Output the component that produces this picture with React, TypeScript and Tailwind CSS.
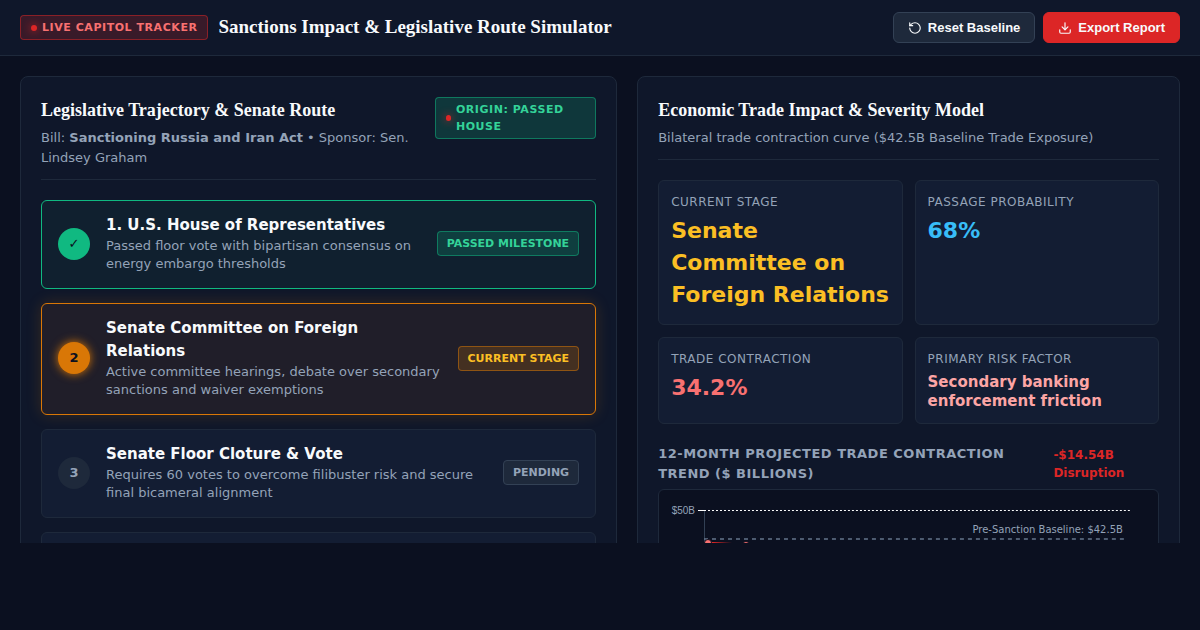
import type { ReactNode } from "react";
import { Download, RotateCcw } from "lucide-react";

type StepState = "passed" | "current" | "pending";

interface Step {
  marker: string;
  title: string;
  detail: string;
  badge: string;
  state: StepState;
}

const steps: Step[] = [
  {
    marker: "✓",
    title: "1. U.S. House of Representatives",
    detail: "Passed floor vote with bipartisan consensus on energy embargo thresholds",
    badge: "Passed Milestone",
    state: "passed",
  },
  {
    marker: "2",
    title: "Senate Committee on Foreign Relations",
    detail: "Active committee hearings, debate over secondary sanctions and waiver exemptions",
    badge: "Current Stage",
    state: "current",
  },
  {
    marker: "3",
    title: "Senate Floor Cloture & Vote",
    detail: "Requires 60 votes to overcome filibuster risk and secure final bicameral alignment",
    badge: "Pending",
    state: "pending",
  },
];

const cardStyles: Record<StepState, string> = {
  passed: "border-[#10b981] bg-[#10202f]",
  current: "border-[#d97706] bg-[#201e29] shadow-[0_0_15px_rgba(217,119,6,0.2)]",
  pending: "border-[#1e293b] bg-[#131d33]",
};

const markerStyles: Record<StepState, string> = {
  passed: "bg-[#10b981] text-[#0b1020]",
  current: "bg-[#d97706] text-[#0b1020] shadow-[0_0_10px_#d97706]",
  pending: "bg-[#1e293b] text-[#94a3b8]",
};

const badgeStyles: Record<StepState, string> = {
  passed: "border-[#10b981]/50 bg-[#10b981]/20 text-[#34d399]",
  current: "border-[#d97706]/50 bg-[#d97706]/20 text-[#fbbf24]",
  pending: "border-[#334155] bg-[#1e293b] text-[#94a3b8]",
};

function StatusPill({ tone, children }: { tone: string; children: ReactNode }) {
  return (
    <span
      className={`flex items-center gap-[5px] rounded border px-2.5 py-[3px] text-[11px] leading-[17px] font-bold tracking-wider uppercase ${tone}`}
    >
      <span className="size-1.5 rounded-full bg-[#dc2626] shadow-[0_0_8px_#dc2626]" />
      {children}
    </span>
  );
}

function StepCard({ step }: { step: Step }) {
  return (
    <li className={`flex items-center gap-4 rounded-md border px-4 pt-[13px] pb-[15px] ${cardStyles[step.state]}`}>
      <span
        className={`flex size-8 shrink-0 items-center justify-center rounded-full text-[13px] font-bold ${markerStyles[step.state]}`}
      >
        {step.marker}
      </span>
      <div className="flex-1">
        <h3 className="pr-1 text-[15px] leading-[23px] font-bold text-[#f8fafc]">{step.title}</h3>
        <p className="text-[13px] leading-[18px] text-[#94a3b8]">{step.detail}</p>
      </div>
      <span
        className={`shrink-0 rounded border px-[9px] py-[3px] text-[11px] leading-[17px] font-bold uppercase ${badgeStyles[step.state]}`}
      >
        {step.badge}
      </span>
    </li>
  );
}

function Metric({ label, value, tone }: { label: string; value: string; tone: string }) {
  return (
    <div className="rounded-md border border-[#1e293b] bg-[#131d33] p-3">
      <dt className="text-[12px] leading-[19px] tracking-[0.5px] text-[#94a3b8] uppercase">{label}</dt>
      <dd className={`font-bold ${tone}`}>{value}</dd>
    </div>
  );
}

function TrendChart() {
  return (
    <svg viewBox="0 0 475 200" className="block w-full" role="img" aria-label="Projected trade contraction">
      <line x1="33.5" y1="8" x2="33.5" y2="190" stroke="#334155" />
      <line x1="27" y1="8.5" x2="33" y2="8.5" stroke="#fff" />
      <line x1="33" y1="8.5" x2="459" y2="8.5" stroke="#fff" strokeDasharray="2 2" />
      <text x="24" y="12" textAnchor="end" fontSize="10" className="fill-[#94a3b8] font-['Liberation_Sans',sans-serif]">
        $50B
      </text>
      <line x1="33" y1="37" x2="453" y2="37" stroke="#64748b" strokeWidth="1.5" strokeDasharray="4 4" />
      <text x="452" y="31" textAnchor="end" fontSize="10" className="fill-[#94a3b8]">
        Pre-Sanction Baseline: $42.5B
      </text>
      <path d="M37 41 L75 43 L150 62 L260 90 L370 98 L450 100" fill="none" stroke="#dc2626" strokeWidth="2.5" />
      <circle cx="37" cy="41" r="3.5" fill="#f87171" stroke="#0b1020" />
      <circle cx="75" cy="43" r="3.5" fill="#f87171" stroke="#0b1020" />
    </svg>
  );
}

export default function App() {
  return (
    <div className="flex h-screen flex-col bg-[#0b1020] pb-[87px] font-['DejaVu_Sans',sans-serif] text-[#f8fafc]">
      <header className="flex items-center justify-between border-b border-[#1e293b] bg-[#0f172a] px-5 py-3">
        <div className="flex items-center gap-2.5">
          <StatusPill tone="border-[#dc2626]/50 bg-[#dc2626]/20 text-[#f87171]">Live Capitol Tracker</StatusPill>
          <h1 className="pb-px font-['Liberation_Serif',serif] text-[19px] leading-[28px] font-bold">
            Sanctions Impact &amp; Legislative Route Simulator
          </h1>
        </div>
        <div className="flex gap-2 font-['Liberation_Sans',sans-serif] text-[13px] leading-[15px] font-bold">
          <button
            type="button"
            className="flex items-center gap-1.5 rounded-md border border-[#334155] bg-[#1e293b] px-3.5 py-[7px]"
          >
            <RotateCcw size={14} strokeWidth={2} />
            Reset Baseline
          </button>
          <button
            type="button"
            className="flex items-center gap-1.5 rounded-md border border-[#dc2626] bg-[#dc2626] px-3.5 py-[7px]"
          >
            <Download size={14} strokeWidth={2} />
            Export Report
          </button>
        </div>
      </header>

      <main className="grid min-h-0 flex-1 grid-cols-[1.1fr_1fr] items-start gap-5 overflow-hidden px-5 pt-5">
        <section className="rounded-lg border border-[#1e293b] bg-[#0f172a] p-5">
          <div className="flex items-start justify-between border-b border-[#1e293b] pb-[11px]">
            <div>
              <h2 className="font-['Liberation_Serif',serif] text-[18px] leading-[26px] font-bold">
                Legislative Trajectory &amp; Senate Route
              </h2>
              <p className="mt-[5px] text-[13px] leading-5 text-[#94a3b8]">
                Bill: <strong>Sanctioning Russia and Iran Act</strong> • Sponsor: Sen. Lindsey Graham
              </p>
            </div>
            <StatusPill tone="border-[#10b981]/50 bg-[#10b981]/20 text-[#34d399]">Origin: Passed House</StatusPill>
          </div>
          <ol className="mt-5 flex flex-col gap-3.5">
            {steps.map((step) => (
              <StepCard key={step.title} step={step} />
            ))}
            <li className="h-22 rounded-md border border-[#1e293b] bg-[#131d33]" />
          </ol>
        </section>

        <section className="rounded-lg border border-[#1e293b] bg-[#0f172a] p-5">
          <div className="border-b border-[#1e293b] pb-[11px]">
            <h2 className="font-['Liberation_Serif',serif] text-[18px] leading-[26px] font-bold">
              Economic Trade Impact &amp; Severity Model
            </h2>
            <p className="mt-[5px] text-[13px] leading-5 text-[#94a3b8]">
              Bilateral trade contraction curve ($42.5B Baseline Trade Exposure)
            </p>
          </div>
          <dl className="mt-5 grid grid-cols-2 gap-3">
            <Metric
              label="Current Stage"
              value="Senate Committee on Foreign Relations"
              tone="mt-[3px] pb-px text-[22px] leading-8 text-[#fbbf24]"
            />
            <Metric
              label="Passage Probability"
              value="68%"
              tone="mt-[3px] pb-px text-[22px] leading-8 text-[#38bdf8]"
            />
            <Metric
              label="Trade Contraction"
              value="34.2%"
              tone="mt-[3px] pb-px text-[22px] leading-8 text-[#f87171]"
            />
            <Metric
              label="Primary Risk Factor"
              value="Secondary banking enforcement friction"
              tone="mt-1 text-[15px] leading-[19px] text-[#fca5a5]"
            />
          </dl>
          <div className="mt-5 flex items-center justify-between font-bold">
            <h3 className="text-[13px] leading-5 tracking-[0.5px] text-[#94a3b8] uppercase">
              12-Month Projected Trade Contraction Trend ($ Billions)
            </h3>
            <span className="text-[12px] leading-[18px] text-[#dc2626]">-$14.54B Disruption</span>
          </div>
          <div className="mt-[5px] rounded-md border border-[#1e293b] bg-[#0b1020] p-3">
            <TrendChart />
          </div>
        </section>
      </main>
    </div>
  );
}
